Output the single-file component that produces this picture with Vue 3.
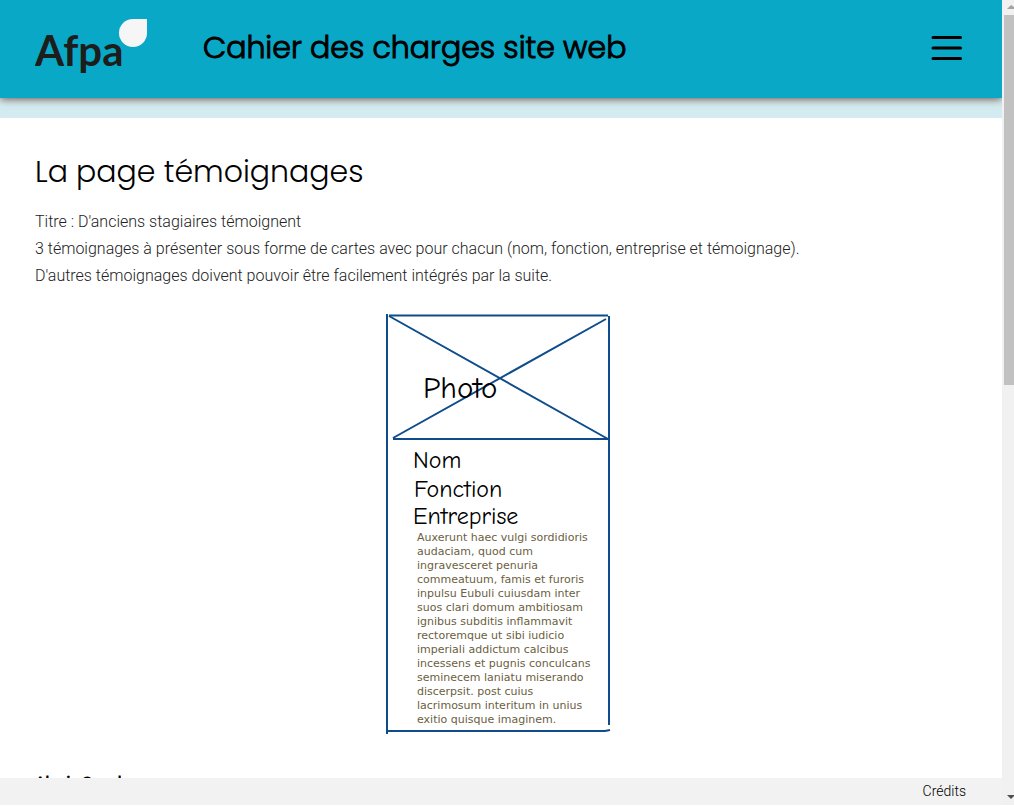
<script setup>
const intro = [
  "Titre : D'anciens stagiaires témoignent",
  '3 témoignages à présenter sous forme de cartes avec pour chacun (nom, fonction, entreprise et témoignage).',
  "D'autres témoignages doivent pouvoir être facilement intégrés par la suite.",
]
const quote = [
  'Auxerunt haec vulgi sordidioris',
  'audaciam, quod cum',
  'ingravesceret penuria',
  'commeatuum, famis et furoris',
  'inpulsu Eubuli cuiusdam inter',
  'suos clari domum ambitiosam',
  'ignibus subditis inflammavit',
  'rectoremque ut sibi iudicio',
  'imperiali addictum calcibus',
  'incessens et pugnis conculcans',
  'seminecem laniatu miserando',
  'discerpsit. post cuius',
  'lacrimosum interitum in unius',
  'exitio quisque imaginem.',
]
</script>

<template>
  <div class="shell">
    <div class="page">
      <header class="bar">
        <a class="logo" href="#" aria-label="Afpa">
          <svg width="114" height="62" viewBox="0 0 114 62">
            <text class="logo-text" x="0" y="49">Afpa</text>
            <path d="M98 2H112V16A14 14 0 1 1 98 2Z" fill="#f6f6f6" />
          </svg>
        </a>
        <h1>Cahier des charges site web</h1>
        <button class="menu" type="button" aria-label="Menu">
          <svg width="32" height="26" viewBox="0 0 32 26" stroke="#000" stroke-width="3" stroke-linecap="round">
            <path d="M2 2.500H29.500M2 13H29.500M2 23.500H29.500" />
          </svg>
        </button>
      </header>
      <main>
        <div class="band"></div>
        <section class="content">
          <h2>La page témoignages</h2>
          <p v-for="line in intro" :key="line">{{ line }}</p>
          <figure>
            <svg width="226" height="422" viewBox="0 0 226 422" role="img" aria-label="Carte de témoignage">
              <g fill="none" stroke="#0e4c8c" stroke-width="2">
                <path d="M2 1V421" />
                <path d="M4 2.500H223" />
                <path d="M224 3V412" />
                <path d="M2 418H220L225 417" />
                <path d="M8 126H224" />
                <path d="M4 3L223 126M8 125L221 6" />
              </g>
              <text class="hand photo" x="38" y="85">Photo</text>
              <text class="hand" x="28" y="155">Nom</text>
              <text class="hand" x="29" y="184">Fonction</text>
              <text class="hand" x="28" y="211">Entreprise</text>
              <text v-for="(line, i) in quote" :key="line" class="quote" x="32" :y="228 + i * 14">{{ line }}</text>
            </svg>
          </figure>
          <h3>Alexis Sorel</h3>
        </section>
      </main>
      <footer><a href="#">Crédits</a></footer>
    </div>
    <div class="scroll" aria-hidden="true">
      <svg class="arrow" width="10" height="15" viewBox="0 0 10 15"><path d="M3 9H10V7L7 5Z" fill="#a3a3a3" /></svg>
      <div class="thumb"></div>
      <svg class="arrow" width="10" height="15" viewBox="0 0 10 15"><path d="M3 5H10V6L7 9Z" fill="#505050" /></svg>
    </div>
  </div>
</template>

<style>
body {
  overflow: hidden;
  background: #fff;
}
</style>

<style scoped>
.shell {
  display: flex;
  height: calc(100vh - 1px);
  overflow: hidden;
  font-family: Roboto, "Liberation Sans", sans-serif;
  color: #000;
}
.page {
  flex: 1;
  min-width: 0;
  display: flex;
  flex-direction: column;
  overflow: hidden;
}
.bar {
  flex: none;
  position: relative;
  z-index: 1;
  display: flex;
  align-items: center;
  height: 98px;
  padding: 0 39px 2px 35px;
  box-sizing: border-box;
  background: #0aa8c7;
  box-shadow: 0 1px 8px rgba(80, 40, 30, 0.8);
}
.logo,
.logo svg,
.menu svg,
figure svg {
  display: block;
}
.logo-text {
  font: 700 42px Lato, sans-serif;
  fill: #1d1d1b;
}
h1 {
  flex: 1;
  margin: 0 0 0 54px;
  font: 300 30px/48px Poppins, Inter, sans-serif;
  -webkit-text-stroke: 1px #000;
}
.menu {
  padding: 0;
  border: 0;
  background: none;
}
main {
  flex: 1;
  min-height: 0;
  overflow: hidden;
}
.band {
  height: 20px;
  background: #d4ecf1;
}
.content {
  padding: 30px 35px;
}
h2 {
  margin: 0 0 12px;
  font: 300 30px/48px Poppins, Inter, sans-serif;
}
p {
  margin: 0;
  font-size: 16px;
  line-height: 27px;
  font-weight: 300;
  color: #222;
}
figure {
  display: flex;
  justify-content: center;
  margin: 24px 6px 34px 0;
}
.hand {
  font: 400 24px "Comic Sans MS", "Comic Neue", Lato, sans-serif;
}
.photo {
  font-size: 31px;
}
.quote {
  font: 400 11px "DejaVu Sans", sans-serif;
  fill: #6b6040;
}
h3 {
  margin: 0;
  font: 300 16px/27px Poppins, Inter, sans-serif;
  -webkit-text-stroke: 1px #000;
}
footer {
  flex: none;
  height: 27px;
  padding: 0 36px;
  text-align: right;
  background: #f2f2f2;
}
footer a {
  font-size: 14px;
  line-height: 27px;
  font-weight: 300;
  color: #000;
  text-decoration: none;
}
.scroll {
  flex: none;
  display: flex;
  flex-direction: column;
  width: 10px;
  padding-left: 2px;
  background: #f1f1f1;
}
.arrow {
  flex: none;
  display: block;
}
.thumb {
  height: 46%;
  margin-bottom: auto;
  background: #c1c1c1;
}
</style>
